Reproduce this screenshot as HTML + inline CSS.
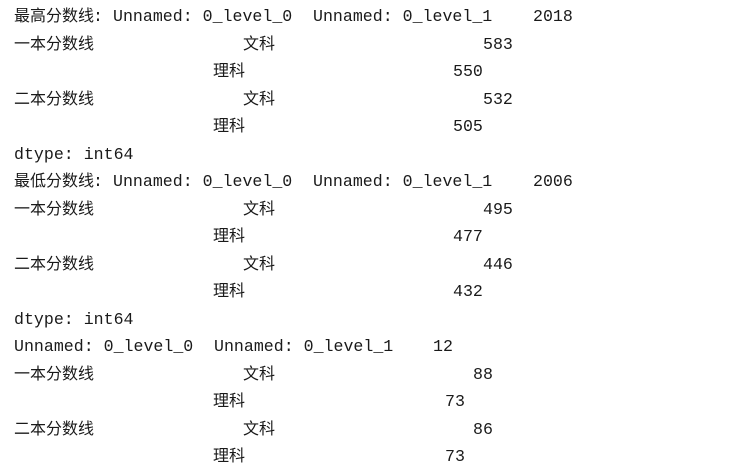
<!DOCTYPE html>
<html><head><meta charset="utf-8"><style>
body{margin:0;width:733px;height:470px;background:#fff;position:relative;overflow:hidden;color:#1a1a1a}
span{position:absolute;white-space:pre;line-height:20px;font-size:16.6px;font-family:"Liberation Mono","Noto Sans CJK SC",monospace}
.c{font-family:"Noto Sans CJK SC","WenQuanYi Zen Hei",sans-serif;font-size:16px;margin-top:-3px}
</style></head><body>
<script>
const L=[
[[14,'最高分数线',1],[93,':'],[113,'Unnamed: 0_level_0'],[313,'Unnamed: 0_level_1'],[533,'2018']],
[[14,'一本分数线',1],[243,'文科',1],[483,'583']],
[[213,'理科',1],[453,'550']],
[[14,'二本分数线',1],[243,'文科',1],[483,'532']],
[[213,'理科',1],[453,'505']],
[[14,'dtype: int64']],
[[14,'最低分数线',1],[93,':'],[113,'Unnamed: 0_level_0'],[313,'Unnamed: 0_level_1'],[533,'2006']],
[[14,'一本分数线',1],[243,'文科',1],[483,'495']],
[[213,'理科',1],[453,'477']],
[[14,'二本分数线',1],[243,'文科',1],[483,'446']],
[[213,'理科',1],[453,'432']],
[[14,'dtype: int64']],
[[14,'Unnamed: 0_level_0'],[214,'Unnamed: 0_level_1'],[433,'12']],
[[14,'一本分数线',1],[243,'文科',1],[473,'88']],
[[213,'理科',1],[445,'73']],
[[14,'二本分数线',1],[243,'文科',1],[473,'86']],
[[213,'理科',1],[445,'73']]];
let h='';L.forEach((r,i)=>{const y=Math.round(16+i*27.5-9);r.forEach(([x,t,c])=>{h+=`<span class="${c?'c':''}" style="left:${x}px;top:${y}px">${t}</span>`})});
document.write(h);
</script>
</body></html>
